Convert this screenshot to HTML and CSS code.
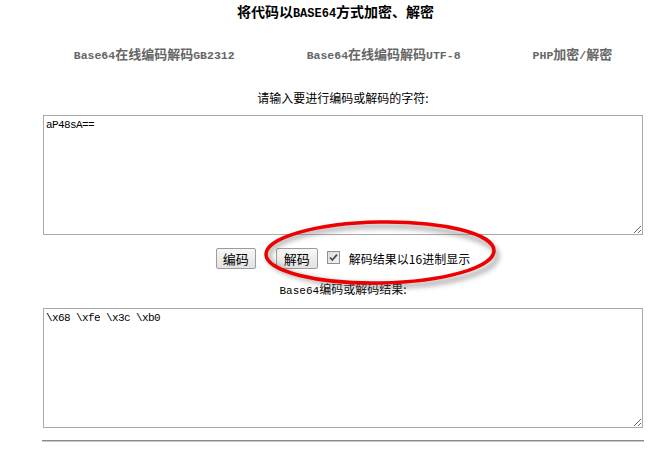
FILE: index.html
```
<!DOCTYPE html>
<html lang="zh-CN">
<head>
<meta charset="utf-8">
<title>Base64</title>
<link rel="stylesheet" href="styles.css">
</head>
<body>
<h1 class="title">将代码以<span class="lat">BASE64</span>方式加密、解密</h1>
<div class="wrap">
  <nav class="nav">
    <a class="nav-link" href="#"><span class="latn">Base64</span>在线编码解码<span class="latn">GB2312</span></a>
    <a class="nav-link" href="#"><span class="latn">Base64</span>在线编码解码<span class="latn">UTF-8</span></a>
    <a class="nav-link" href="#"><span class="latn">PHP</span>加密<span class="latn">/</span>解密</a>
  </nav>
  <div class="label">请输入要进行编码或解码的字符:</div>
  <textarea class="box">aP48sA==</textarea>
  <div class="actions">
    <button class="btn">编码</button>
    <button class="btn btn2">解码</button>
    <span class="chk">
      <svg width="13" height="13" viewBox="0 0 13 13">
        <defs>
          <linearGradient id="g" x1="0" y1="0" x2="1" y2="1">
            <stop offset="0" stop-color="#dcdcdc"/>
            <stop offset="1" stop-color="#f4f4f4"/>
          </linearGradient>
        </defs>
        <rect x="0.5" y="0.5" width="12" height="12" fill="url(#g)" stroke="#8e8f8f"/>
        <path d="M3 6.5 L5.3 9 L10 3.6" fill="none" stroke="#4a4a4a" stroke-width="1.8"/>
      </svg>
    </span>
    <span class="chk-label">解码结果以16进制显示</span>
  </div>
  <div class="label label2"><span class="latn2">Base64</span>编码或解码结果:</div>
  <textarea class="box">\x68 \xfe \x3c \xb0</textarea>
  <hr class="rule">
</div>
<svg class="mark" width="250" height="80" viewBox="0 0 250 80">
  <defs>
    <filter id="sh" x="-10%" y="-30%" width="120%" height="160%">
      <feGaussianBlur stdDeviation="2.5"/>
    </filter>
  </defs>
  <ellipse cx="125" cy="41" rx="114" ry="30" fill="none" stroke="#777" stroke-width="5" opacity="0.55" filter="url(#sh)"/>
  <ellipse cx="122" cy="37.5" rx="114" ry="30.5" fill="none" stroke="#ee0000" stroke-width="3.5" transform="rotate(-1 122 37.5)"/>
</svg>
</body>
</html>
```
FILE: styles.css
```
html, body {
  margin: 0;
  padding: 0;
  background: #fff;
}
body {
  position: relative;
  font-family: "Noto Sans CJK SC", "Liberation Sans", sans-serif;
  font-size: 12px;
  color: #000;
}
.title {
  margin: 0;
  padding-top: 2px;
  font-size: 14px;
  line-height: 18px;
  font-weight: bold;
  text-align: center;
}
.lat {
  font-family: "Liberation Mono", monospace;
  font-size: 12px;
}
.wrap {
  margin-left: 42px;
  width: 602px;
}
.nav {
  margin-top: 22px;
  display: flex;
  justify-content: center;
  gap: 72px;
  line-height: 18px;
}
.nav-link {
  color: #666;
  font-weight: bold;
  font-size: 13px;
  text-decoration: none;
}
.latn {
  font-family: "Liberation Mono", monospace;
  font-size: 11.5px;
}
.latn2 {
  font-family: "Liberation Mono", monospace;
  font-size: 11px;
}
.label {
  margin-top: 24px;
  text-align: center;
  line-height: 18px;
  font-size: 12px;
}
.label2 {
  margin-top: 11px;
}
.box {
  display: block;
  box-sizing: border-box;
  margin: 8px 0 0 1px;
  width: 600px;
  height: 120px;
  padding: 2px;
  border: 1px solid #a9a9a9;
  font-family: "Liberation Mono", monospace;
  font-size: 11px;
  letter-spacing: -0.6px;
  line-height: 14px;
  color: #000;
  resize: both;
  outline: none;
}
.actions {
  margin-top: 13px;
  height: 21px;
  display: flex;
  justify-content: center;
  align-items: center;
}
.btn {
  box-sizing: border-box;
  height: 21px;
  width: 40px;
  padding: 0;
  border: 1px solid #9c9c9c;
  border-radius: 2px;
  background: linear-gradient(#f7f7f7, #e2e2e2);
  font-family: "Noto Sans CJK SC", sans-serif;
  font-size: 13px;
  line-height: 19px;
  color: #000;
}
.btn2 {
  width: 42px;
  margin-left: 20px;
}
.chk {
  display: flex;
  margin-left: 9px;
  margin-top: -2px;
}
.chk-label {
  margin-left: 9px;
  font-size: 12px;
  line-height: 18px;
}
.rule {
  margin: 12px 0 0 0;
  border: 0;
  border-top: 1px solid #8a8a8a;
  border-bottom: 1px solid #c8c8c8;
  height: 0;
}
.mark {
  position: absolute;
  left: 258px;
  top: 215px;
}
```
